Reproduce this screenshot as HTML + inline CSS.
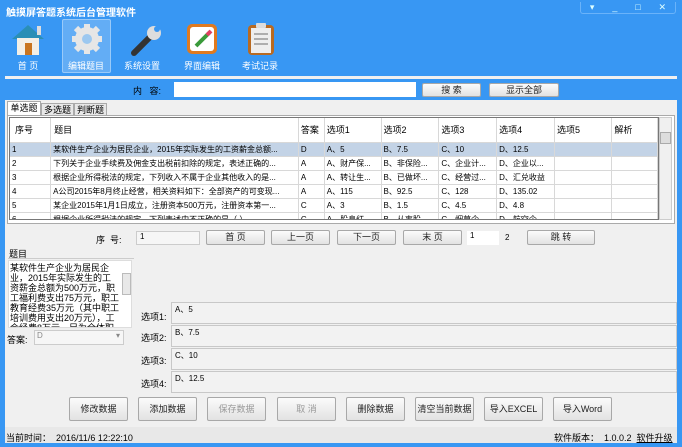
<!DOCTYPE html>
<html><head><meta charset="utf-8"><style>
*{margin:0;padding:0;box-sizing:border-box}
body{width:682px;height:447px;overflow:hidden;background:#3897f3;font-family:"Liberation Sans","Noto Sans CJK SC",sans-serif;font-size:9px;color:#000;position:relative}
.a{position:absolute}
.title{left:6px;top:4px;color:#fff;font-weight:bold;font-size:10px}
.tb{color:#fff;font-size:9px;text-align:center;width:50px}
.panel{left:5px;top:76px;width:672px;height:367px;background:#f0f0f0}
.btn{background:linear-gradient(#fbfbfb,#e2e2e2);border:1px solid #a8a8a8;border-radius:2px;text-align:center;font-size:9px;color:#222;white-space:nowrap}
table{border-collapse:collapse;font-size:8px}
td{border-right:1px solid #d8d8d8;border-bottom:1px solid #d8d8d8;height:14px;padding-left:2px;white-space:nowrap;overflow:hidden}
.box{background:#f2f2f2;border:1px solid #c8c8c8;font-size:8px;padding:1px 3px}
.lab{font-size:9px}
.tab{white-space:nowrap;font-size:9px;text-align:center;line-height:12px;border:1px solid #aaa}
</style></head><body>
<div class="a title">触摸屏答题系统后台管理软件</div>
<div class="a" style="left:580px;top:2px;width:96px;height:12px;border:1px solid #6ab3fa;border-top:none;border-radius:0 0 3px 3px;color:#dff;font-size:9px;display:flex;justify-content:space-around">
<span>▾</span><span>_</span><span>□</span><span>✕</span></div>
<svg class="a" style="left:10px;top:23px" width="36" height="34"><polygon points="18,2 34,16 2,16" fill="#2a8fb6"/><rect x="27" y="3" width="4" height="9" fill="#ddd"/><rect x="7" y="15" width="22" height="17" fill="#f3efe6"/><rect x="15" y="20" width="7" height="12" fill="#c9751f"/></svg>
<div class="a tb" style="left:3px;top:59px">首 页</div>
<div class="a" style="left:62px;top:19px;width:49px;height:54px;background:rgba(255,255,255,0.22);border:1px solid rgba(255,255,255,0.35);border-radius:2px"></div>
<svg class="a" style="left:70px;top:22px" width="34" height="34" viewBox="0 0 34 34"><g fill="#e6e6e6"><circle cx="17" cy="17" r="12"/><g stroke="#e6e6e6" stroke-width="6"><line x1="17" y1="2" x2="17" y2="32"/><line x1="2" y1="17" x2="32" y2="17"/><line x1="6" y1="6" x2="28" y2="28"/><line x1="28" y1="6" x2="6" y2="28"/></g></g><circle cx="17" cy="17" r="5" fill="#9cc8f0"/></svg>
<div class="a tb" style="left:61px;top:59px">编辑题目</div>
<svg class="a" style="left:128px;top:23px" width="36" height="34"><line x1="6" y1="30" x2="22" y2="14" stroke="#333" stroke-width="6" stroke-linecap="round"/><circle cx="26" cy="10" r="7" fill="#ddd"/><circle cx="29" cy="6" r="3" fill="#3897f3"/></svg>
<div class="a tb" style="left:117px;top:59px">系统设置</div>
<svg class="a" style="left:186px;top:23px" width="32" height="32"><rect x="1" y="1" width="30" height="30" rx="5" fill="#e07a1f"/><rect x="4" y="4" width="24" height="24" rx="3" fill="#fff"/><line x1="10" y1="23" x2="24" y2="9" stroke="#3a9a3a" stroke-width="4"/><line x1="21" y1="12" x2="25" y2="8" stroke="#e04060" stroke-width="4"/></svg>
<div class="a tb" style="left:177px;top:59px">界面编辑</div>
<svg class="a" style="left:246px;top:22px" width="30" height="34"><rect x="2" y="3" width="26" height="30" rx="4" fill="#b86a22"/><rect x="5" y="6" width="20" height="25" fill="#eee"/><rect x="10" y="1" width="10" height="5" rx="1" fill="#ddd"/><g stroke="#999" stroke-width="1.5"><line x1="8" y1="12" x2="22" y2="12"/><line x1="8" y1="17" x2="22" y2="17"/><line x1="8" y1="22" x2="22" y2="22"/></g></svg>
<div class="a tb" style="left:235px;top:59px">考试记录</div>

<div class="a panel"></div>
<div class="a" style="left:5px;top:79px;width:672px;height:21px;background:#3897f3"></div>
<div class="a" style="left:133px;top:84px;font-size:9px">内&nbsp;&nbsp;&nbsp;容:</div>
<div class="a" style="left:174px;top:82px;width:242px;height:15px;background:#fff"></div>
<div class="a btn" style="left:422px;top:83px;width:59px;height:14px;line-height:12px">搜 索</div>
<div class="a btn" style="left:489px;top:83px;width:70px;height:14px;line-height:12px">显示全部</div>
<div class="a tab" style="left:7px;top:101px;width:34px;height:15px;background:#fff;border-bottom:none;line-height:13px">单选题</div>
<div class="a tab" style="left:41px;top:103px;width:33px;height:13px;background:#e8e8e8">多选题</div>
<div class="a tab" style="left:74px;top:103px;width:33px;height:13px;background:#e8e8e8">判断题</div>
<div class="a" style="left:7px;top:115px;width:668px;height:109px;background:#fff;border:1px solid #aaa"></div>
<div class="a" style="left:9px;top:117px;width:650px;height:103px;overflow:hidden;border:1px solid #777;background:#fff">
<table>
<tr style="height:24px"><td style="width:41px;height:24px;padding-left:5px;font-size:9px">序号</td><td style="width:248px;padding-left:3px;font-size:9px">题目</td><td style="width:26px;font-size:9px">答案</td><td style="width:57px;font-size:9px">选项1</td><td style="width:58px;font-size:9px">选项2</td><td style="width:58px;font-size:9px">选项3</td><td style="width:58px;font-size:9px">选项4</td><td style="width:58px;font-size:9px">选项5</td><td style="width:46px;font-size:9px">解析</td></tr>
<tr style="background:#c3d3e6"><td>1</td><td>某软件生产企业为居民企业，2015年实际发生的工资薪金总额...</td><td>D</td><td>A、5</td><td>B、7.5</td><td>C、10</td><td>D、12.5</td><td></td><td></td></tr>
<tr><td>2</td><td>下列关于企业手续费及佣金支出税前扣除的规定，表述正确的...</td><td>A</td><td>A、财产保...</td><td>B、非保险...</td><td>C、企业计...</td><td>D、企业以...</td><td></td><td></td></tr>
<tr><td>3</td><td>根据企业所得税法的规定，下列收入不属于企业其他收入的是...</td><td>A</td><td>A、转让生...</td><td>B、已做坏...</td><td>C、经营过...</td><td>D、汇兑收益</td><td></td><td></td></tr>
<tr><td>4</td><td>A公司2015年8月终止经营，相关资料如下：全部资产的可变现...</td><td>A</td><td>A、115</td><td>B、92.5</td><td>C、128</td><td>D、135.02</td><td></td><td></td></tr>
<tr><td>5</td><td>某企业2015年1月1日成立，注册资本500万元，注册资本第一...</td><td>C</td><td>A、3</td><td>B、1.5</td><td>C、4.5</td><td>D、4.8</td><td></td><td></td></tr>
<tr><td>6</td><td>根据企业所得税法的规定，下列表述中不正确的是（ ）。</td><td>C</td><td>A、股息红</td><td>B、从事股</td><td>C、烟草企</td><td>D、航空企</td><td></td><td></td></tr>
</table></div>
<div class="a" style="left:659px;top:117px;width:13px;height:103px;background:#f0f0f0;border:1px solid #ccc"></div>
<div class="a" style="left:660px;top:132px;width:11px;height:12px;background:#ddd;border:1px solid #aaa"></div>
<div class="a lab" style="left:96px;top:233px">序&nbsp;&nbsp;号:</div>
<div class="a" style="left:136px;top:231px;width:64px;height:14px;background:#f6f6f6;border:1px solid #ccc;font-size:8px;padding-left:3px">1</div>
<div class="a btn" style="left:206px;top:230px;width:59px;height:15px;line-height:13px">首 页</div>
<div class="a btn" style="left:271px;top:230px;width:59px;height:15px;line-height:13px">上一页</div>
<div class="a btn" style="left:337px;top:230px;width:59px;height:15px;line-height:13px">下一页</div>
<div class="a btn" style="left:403px;top:230px;width:59px;height:15px;line-height:13px">末 页</div>
<div class="a" style="left:467px;top:231px;width:32px;height:14px;background:#fff;font-size:8px;padding-left:3px">1</div>
<div class="a" style="left:505px;top:233px;font-size:8px">2</div>
<div class="a btn" style="left:527px;top:230px;width:68px;height:15px;line-height:13px">跳 转</div>
<div class="a lab" style="left:9px;top:247px">题目</div>
<div class="a" style="left:8px;top:258px;width:126px;height:1px;background:#ccc"></div>
<div class="a" style="left:8px;top:260px;width:124px;height:68px;background:#fff;border:1px solid #ddd;font-size:9px;line-height:10px;padding:2px 12px 0 1px;overflow:hidden">某软件生产企业为居民企业，2015年实际发生的工资薪金总额为500万元，职工福利费支出75万元，职工教育经费35万元（其中职工培训费用支出20万元），工会经费8万元，另为全体职工支付补充养老保险</div>
<div class="a" style="left:122px;top:273px;width:9px;height:22px;background:#e8e8e8;border:1px solid #bbb"></div>
<div class="a lab" style="left:7px;top:333px">答案:</div>
<div class="a" style="left:34px;top:330px;width:90px;height:15px;background:#f6f6f6;border:1px solid #ccc;font-size:8px;color:#888;padding-left:2px">D<span style="float:right;padding-right:3px">▾</span></div>
<div class="a lab" style="left:141px;top:310px">选项1:</div>
<div class="a box" style="left:171px;top:302px;width:506px;height:22px">A、5</div>
<div class="a lab" style="left:141px;top:331px">选项2:</div>
<div class="a box" style="left:171px;top:325px;width:506px;height:22px">B、7.5</div>
<div class="a lab" style="left:141px;top:354px">选项3:</div>
<div class="a box" style="left:171px;top:348px;width:506px;height:22px">C、10</div>
<div class="a lab" style="left:141px;top:377px">选项4:</div>
<div class="a box" style="left:171px;top:371px;width:506px;height:22px">D、12.5</div>
<div class="a btn" style="left:69px;top:397px;width:59px;height:24px;line-height:22px">修改数据</div>
<div class="a btn" style="left:138px;top:397px;width:59px;height:24px;line-height:22px">添加数据</div>
<div class="a btn" style="left:207px;top:397px;width:59px;height:24px;line-height:22px;color:#999">保存数据</div>
<div class="a btn" style="left:277px;top:397px;width:59px;height:24px;line-height:22px;color:#999">取 消</div>
<div class="a btn" style="left:346px;top:397px;width:59px;height:24px;line-height:22px">删除数据</div>
<div class="a btn" style="left:415px;top:397px;width:59px;height:24px;line-height:22px">清空当前数据</div>
<div class="a btn" style="left:484px;top:397px;width:59px;height:24px;line-height:22px">导入EXCEL</div>
<div class="a btn" style="left:553px;top:397px;width:59px;height:24px;line-height:22px">导入Word</div>
<div class="a" style="left:5px;top:427px;width:672px;height:16px;background:#e8e8e8"></div>
<div class="a lab" style="left:6px;top:431px">当前时间：&nbsp;&nbsp;2016/11/6 12:22:10</div>
<div class="a lab" style="left:554px;top:431px">软件版本：&nbsp;&nbsp;1.0.0.2&nbsp;&nbsp;<u>软件升级</u></div>
</body></html>
